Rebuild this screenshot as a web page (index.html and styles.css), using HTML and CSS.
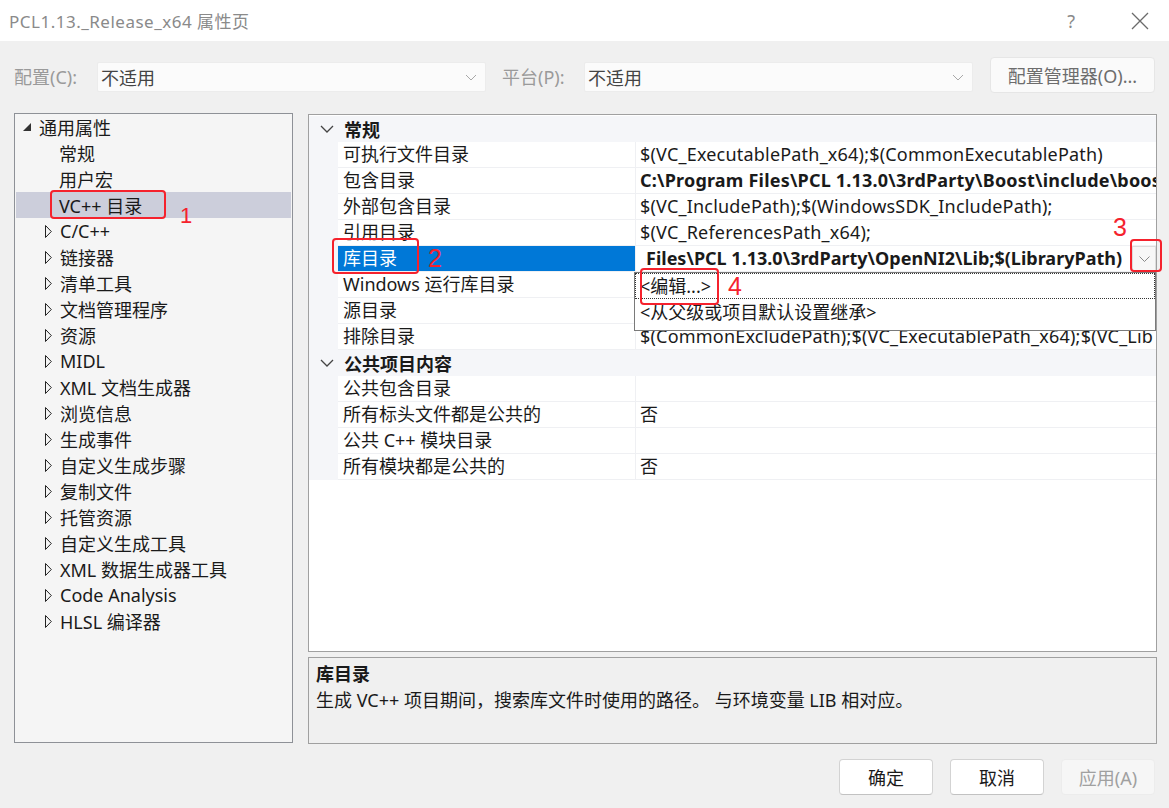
FILE: index.html
```html
<!DOCTYPE html>
<html lang="zh-CN">
<head>
  <meta charset="UTF-8">
  <title>PCL1.13._Release_x64 属性页</title>
  <link rel="stylesheet" href="styles.css">
</head>
<body>
  <div class="window">
    <!-- Title bar -->
    <header class="titlebar">
      <span class="title">PCL1.13._Release_x64 属性页</span>
      <div class="title-buttons">
        <span class="help">?</span>
        <svg class="close" width="18" height="18" viewBox="0 0 18 18"><path d="M1 1 L17 17 M17 1 L1 17" stroke="#6b6b6b" stroke-width="1.3" fill="none"/></svg>
      </div>
    </header>

    <!-- Configuration row -->
    <div class="toolbar">
      <label class="tb-label">配置(C):</label>
      <div class="combo">
        <span>不适用</span>
        <svg width="12" height="7" viewBox="0 0 12 7"><path d="M1 1 L6 6 L11 1" stroke="#a8a8a8" stroke-width="1" fill="none"/></svg>
      </div>
      <label class="tb-label platform">平台(P):</label>
      <div class="combo">
        <span>不适用</span>
        <svg width="12" height="7" viewBox="0 0 12 7"><path d="M1 1 L6 6 L11 1" stroke="#a8a8a8" stroke-width="1" fill="none"/></svg>
      </div>
      <button class="cfg-btn">配置管理器(O)...</button>
    </div>

    <div class="main">
      <!-- Tree -->
      <aside class="tree">
        <div class="node open">
          <span class="twisty"><svg width="9" height="9" viewBox="0 0 9 9"><polygon points="8,0 8,8 0,8" fill="#333"/></svg></span>
          <span>通用属性</span>
        </div>
        <div class="node child"><span>常规</span></div>
        <div class="node child"><span>用户宏</span></div>
        <div class="node child selected"><span>VC++ 目录</span></div>
        <div class="node"><span class="twisty"><svg class="tri" width="7" height="13" viewBox="0 0 7 13"><polygon points="0.5,0.5 6.3,6.5 0.5,12.5" fill="none" stroke="#222"/></svg></span><span>C/C++</span></div>
        <div class="node"><span class="twisty"><svg class="tri" width="7" height="13" viewBox="0 0 7 13"><polygon points="0.5,0.5 6.3,6.5 0.5,12.5" fill="none" stroke="#222"/></svg></span><span>链接器</span></div>
        <div class="node"><span class="twisty"><svg class="tri" width="7" height="13" viewBox="0 0 7 13"><polygon points="0.5,0.5 6.3,6.5 0.5,12.5" fill="none" stroke="#222"/></svg></span><span>清单工具</span></div>
        <div class="node"><span class="twisty"><svg class="tri" width="7" height="13" viewBox="0 0 7 13"><polygon points="0.5,0.5 6.3,6.5 0.5,12.5" fill="none" stroke="#222"/></svg></span><span>文档管理程序</span></div>
        <div class="node"><span class="twisty"><svg class="tri" width="7" height="13" viewBox="0 0 7 13"><polygon points="0.5,0.5 6.3,6.5 0.5,12.5" fill="none" stroke="#222"/></svg></span><span>资源</span></div>
        <div class="node"><span class="twisty"><svg class="tri" width="7" height="13" viewBox="0 0 7 13"><polygon points="0.5,0.5 6.3,6.5 0.5,12.5" fill="none" stroke="#222"/></svg></span><span>MIDL</span></div>
        <div class="node"><span class="twisty"><svg class="tri" width="7" height="13" viewBox="0 0 7 13"><polygon points="0.5,0.5 6.3,6.5 0.5,12.5" fill="none" stroke="#222"/></svg></span><span>XML 文档生成器</span></div>
        <div class="node"><span class="twisty"><svg class="tri" width="7" height="13" viewBox="0 0 7 13"><polygon points="0.5,0.5 6.3,6.5 0.5,12.5" fill="none" stroke="#222"/></svg></span><span>浏览信息</span></div>
        <div class="node"><span class="twisty"><svg class="tri" width="7" height="13" viewBox="0 0 7 13"><polygon points="0.5,0.5 6.3,6.5 0.5,12.5" fill="none" stroke="#222"/></svg></span><span>生成事件</span></div>
        <div class="node"><span class="twisty"><svg class="tri" width="7" height="13" viewBox="0 0 7 13"><polygon points="0.5,0.5 6.3,6.5 0.5,12.5" fill="none" stroke="#222"/></svg></span><span>自定义生成步骤</span></div>
        <div class="node"><span class="twisty"><svg class="tri" width="7" height="13" viewBox="0 0 7 13"><polygon points="0.5,0.5 6.3,6.5 0.5,12.5" fill="none" stroke="#222"/></svg></span><span>复制文件</span></div>
        <div class="node"><span class="twisty"><svg class="tri" width="7" height="13" viewBox="0 0 7 13"><polygon points="0.5,0.5 6.3,6.5 0.5,12.5" fill="none" stroke="#222"/></svg></span><span>托管资源</span></div>
        <div class="node"><span class="twisty"><svg class="tri" width="7" height="13" viewBox="0 0 7 13"><polygon points="0.5,0.5 6.3,6.5 0.5,12.5" fill="none" stroke="#222"/></svg></span><span>自定义生成工具</span></div>
        <div class="node"><span class="twisty"><svg class="tri" width="7" height="13" viewBox="0 0 7 13"><polygon points="0.5,0.5 6.3,6.5 0.5,12.5" fill="none" stroke="#222"/></svg></span><span>XML 数据生成器工具</span></div>
        <div class="node"><span class="twisty"><svg class="tri" width="7" height="13" viewBox="0 0 7 13"><polygon points="0.5,0.5 6.3,6.5 0.5,12.5" fill="none" stroke="#222"/></svg></span><span>Code Analysis</span></div>
        <div class="node"><span class="twisty"><svg class="tri" width="7" height="13" viewBox="0 0 7 13"><polygon points="0.5,0.5 6.3,6.5 0.5,12.5" fill="none" stroke="#222"/></svg></span><span>HLSL 编译器</span></div>
      </aside>

      <!-- Property grid + description -->
      <section class="right">
        <div class="grid">
          <div class="cat">
            <span class="cat-icon"><svg width="14" height="8" viewBox="0 0 14 8"><path d="M1 1 L7 7 L13 1" stroke="#444" stroke-width="1.3" fill="none"/></svg></span>
            <span class="cat-name">常规</span>
          </div>
          <div class="prow"><span class="gut"></span><span class="name">可执行文件目录</span><span class="val">$(VC_ExecutablePath_x64);$(CommonExecutablePath)</span></div>
          <div class="prow"><span class="gut"></span><span class="name">包含目录</span><span class="val bold">C:\Program Files\PCL 1.13.0\3rdParty\Boost\include\boost-1_80</span></div>
          <div class="prow"><span class="gut"></span><span class="name">外部包含目录</span><span class="val">$(VC_IncludePath);$(WindowsSDK_IncludePath);</span></div>
          <div class="prow"><span class="gut"></span><span class="name">引用目录</span><span class="val">$(VC_ReferencesPath_x64);</span></div>
          <div class="prow active"><span class="gut"></span><span class="name">库目录</span>
            <span class="val edit">
              <span class="edit-text">Files\PCL 1.13.0\3rdParty\OpenNI2\Lib;$(LibraryPath)</span>
              <span class="drop-btn"><svg width="11" height="6" viewBox="0 0 11 6"><path d="M0.5 0.5 L5.5 5.5 L10.5 0.5" stroke="#888" stroke-width="1" fill="none"/></svg></span>
              <span class="droplist">
                <span class="opt focus">&lt;编辑...&gt;</span>
                <span class="opt">&lt;从父级或项目默认设置继承&gt;</span>
              </span>
            </span>
          </div>
          <div class="prow"><span class="gut"></span><span class="name">Windows 运行库目录</span><span class="val"></span></div>
          <div class="prow"><span class="gut"></span><span class="name">源目录</span><span class="val"></span></div>
          <div class="prow"><span class="gut"></span><span class="name">排除目录</span><span class="val">$(CommonExcludePath);$(VC_ExecutablePath_x64);$(VC_Lib</span></div>
          <div class="cat">
            <span class="cat-icon"><svg width="14" height="8" viewBox="0 0 14 8"><path d="M1 1 L7 7 L13 1" stroke="#444" stroke-width="1.3" fill="none"/></svg></span>
            <span class="cat-name">公共项目内容</span>
          </div>
          <div class="prow"><span class="gut"></span><span class="name">公共包含目录</span><span class="val"></span></div>
          <div class="prow"><span class="gut"></span><span class="name">所有标头文件都是公共的</span><span class="val">否</span></div>
          <div class="prow"><span class="gut"></span><span class="name">公共 C++ 模块目录</span><span class="val"></span></div>
          <div class="prow"><span class="gut"></span><span class="name">所有模块都是公共的</span><span class="val">否</span></div>
        </div>
        <div class="desc">
          <div class="desc-title">库目录</div>
          <div class="desc-text">生成 VC++ 项目期间，搜索库文件时使用的路径。 与环境变量 LIB 相对应。</div>
        </div>
      </section>
    </div>

    <!-- Dialog buttons -->
    <footer class="footer">
      <button class="btn">确定</button>
      <button class="btn">取消</button>
      <button class="btn disabled">应用(A)</button>
    </footer>

    <!-- Red annotation marks -->
    <div class="mark box1"></div>
    <div class="mark-num n1">1</div>
    <div class="mark box2"></div>
    <div class="mark-num n2">2</div>
    <div class="mark box3"></div>
    <div class="mark-num n3">3</div>
    <div class="mark box4"></div>
    <div class="mark-num n4">4</div>
  </div>
</body>
</html>
```

FILE: styles.css
```css
/* General */
body {
  margin: 0;
  background-color: #f0f0f0;
  font-family: "Noto Sans", "Noto Sans CJK SC", sans-serif;
  font-size: 18px;
  color: #1a1a1a;
}

.window {
  position: relative;
  width: 1169px;
  height: 808px;
  overflow: hidden;
}

/* Title bar */
.titlebar {
  height: 41px;
  background-color: #fff;
  display: flex;
  align-items: center;
  justify-content: space-between;
  padding-left: 9px;
  box-sizing: border-box;
}

.title {
  color: #8a8a8a;
  font-size: 17px;
  letter-spacing: 0.5px;
}

.title-buttons {
  display: flex;
  align-items: center;
  gap: 56px;
  padding-right: 20px;
}

.help {
  color: #8a8a8a;
  font-size: 18px;
}

/* Toolbar */
.toolbar {
  height: 72px;
  box-sizing: border-box;
  padding: 16px 14px 0 14px;
  display: flex;
  align-items: flex-start;
}

.tb-label {
  width: 83px;
  margin-top: 5px;
  line-height: 30px;
  color: #9a9a9a;
}

.tb-label.platform {
  margin-left: 16px;
  width: 82px;
}

.combo {
  width: 389px;
  height: 30px;
  margin-top: 5px;
  box-sizing: border-box;
  background-color: #fbfbfb;
  border: 1px solid #ececec;
  border-radius: 2px;
  display: flex;
  align-items: center;
  justify-content: space-between;
  padding: 0 8px 0 3px;
  color: #444;
}

.cfg-btn {
  margin-left: 17px;
  width: 165px;
  height: 36px;
  background-color: #fafafa;
  border: 1px solid #e6e6e6;
  border-radius: 4px;
  font-family: inherit;
  font-size: 18px;
  color: #6d6d6d;
  padding: 0;
}

/* Main area */
.main {
  display: flex;
  gap: 15px;
  padding: 0 12px 0 14px;
}

.tree {
  width: 279px;
  height: 630px;
  box-sizing: border-box;
  border: 1px solid #8e9197;
  background-color: #f5f5f5;
}

.node {
  height: 26px;
  display: flex;
  align-items: center;
  padding-left: 29px;
  margin: 0 1px;
  white-space: nowrap;
}

.node .twisty {
  width: 15px;
  display: flex;
  align-items: center;
}

.node.open {
  padding-left: 7px;
}

.node.open .twisty {
  width: 16px;
}

.node.child {
  padding-left: 43px;
}

.node.selected {
  background-color: #cccedb;
}

.right {
  width: 849px;
  display: flex;
  flex-direction: column;
}

/* Property grid */
.grid {
  margin-top: 1px;
  height: 538px;
  box-sizing: border-box;
  border: 1px solid #a0a0a0;
  background-color: #fff;
  padding-top: 1px;
}

.cat {
  height: 26px;
  display: flex;
  align-items: center;
  background-color: #f5f6f9;
  font-weight: bold;
}

.cat-icon {
  width: 35px;
  display: flex;
  justify-content: center;
  padding-left: 1px;
  box-sizing: border-box;
}

.prow {
  display: grid;
  grid-template-columns: 29px 298px 1fr;
  height: 26px;
}

.prow .gut {
  background-color: #f5f6f9;
}

.prow .name,
.prow .val {
  line-height: 25px;
  border-bottom: 1px solid #eff0f3;
  white-space: nowrap;
  overflow: hidden;
}

.prow .name {
  padding-left: 5px;
  border-right: 1px solid #eff0f3;
}

.prow .val {
  padding-left: 4px;
  letter-spacing: 0.2px;
}

.val.bold {
  font-weight: bold;
}

.prow.active .name {
  background-color: #0078d7;
  color: #fff;
}

.val.edit {
  position: relative;
  overflow: visible;
  display: flex;
  align-items: center;
  padding-left: 10px;
  letter-spacing: 0;
}

.edit-text {
  font-weight: bold;
  flex: 1;
  overflow: hidden;
}

.drop-btn {
  width: 24px;
  height: 25px;
  box-sizing: border-box;
  border: 1px solid #dcdcdc;
  background-color: #f7f7f7;
  display: flex;
  align-items: center;
  justify-content: center;
}

.droplist {
  position: absolute;
  top: 26px;
  left: -2px;
  right: 0;
  height: 59px;
  box-sizing: border-box;
  background-color: #fff;
  border: 1px solid #7a7a7a;
  display: flex;
  flex-direction: column;
  z-index: 2;
}

.opt {
  height: 26px;
  line-height: 26px;
  padding-left: 5px;
}

.opt.focus {
  outline: 1px dotted #333;
  outline-offset: -1px;
}

/* Description panel */
.desc {
  margin-top: 5px;
  height: 87px;
  box-sizing: border-box;
  border: 1px solid #a0a0a0;
  padding: 3px 7px;
  line-height: 26px;
}

.desc-title {
  font-weight: bold;
}

/* Footer buttons */
.footer {
  display: flex;
  justify-content: flex-end;
  gap: 17px;
  padding: 15px 14px 0 0;
}

.btn {
  width: 94px;
  height: 36px;
  background-color: #fff;
  border: 1px solid #d3d3d3;
  border-bottom-color: #c2c2c2;
  border-radius: 4px;
  font-family: inherit;
  font-size: 18px;
  color: #1a1a1a;
  padding: 0;
}

.btn.disabled {
  background-color: #f6f6f6;
  border-color: #ececec;
  color: #a0a0a0;
}

/* Annotation marks */
.mark {
  position: absolute;
  border: 2.5px solid #f5222d;
  border-radius: 4px;
  box-sizing: border-box;
  z-index: 5;
}

.mark-num {
  position: absolute;
  color: #f5222d;
  font-family: "Liberation Sans", sans-serif;
  font-size: 25px;
  line-height: 1;
  z-index: 5;
}

.box1 { left: 50px; top: 190px; width: 116px; height: 29px; }
.box2 { left: 332px; top: 238px; width: 87px; height: 36px; }
.box3 { left: 1130px; top: 239px; width: 32px; height: 33px; }
.box4 { left: 640px; top: 268px; width: 79px; height: 37px; }

.n1 { left: 180px; top: 205px; font-size: 22px; }
.n2 { left: 428px; top: 246px; }
.n3 { left: 1113px; top: 215px; }
.n4 { left: 728px; top: 274px; }
```
